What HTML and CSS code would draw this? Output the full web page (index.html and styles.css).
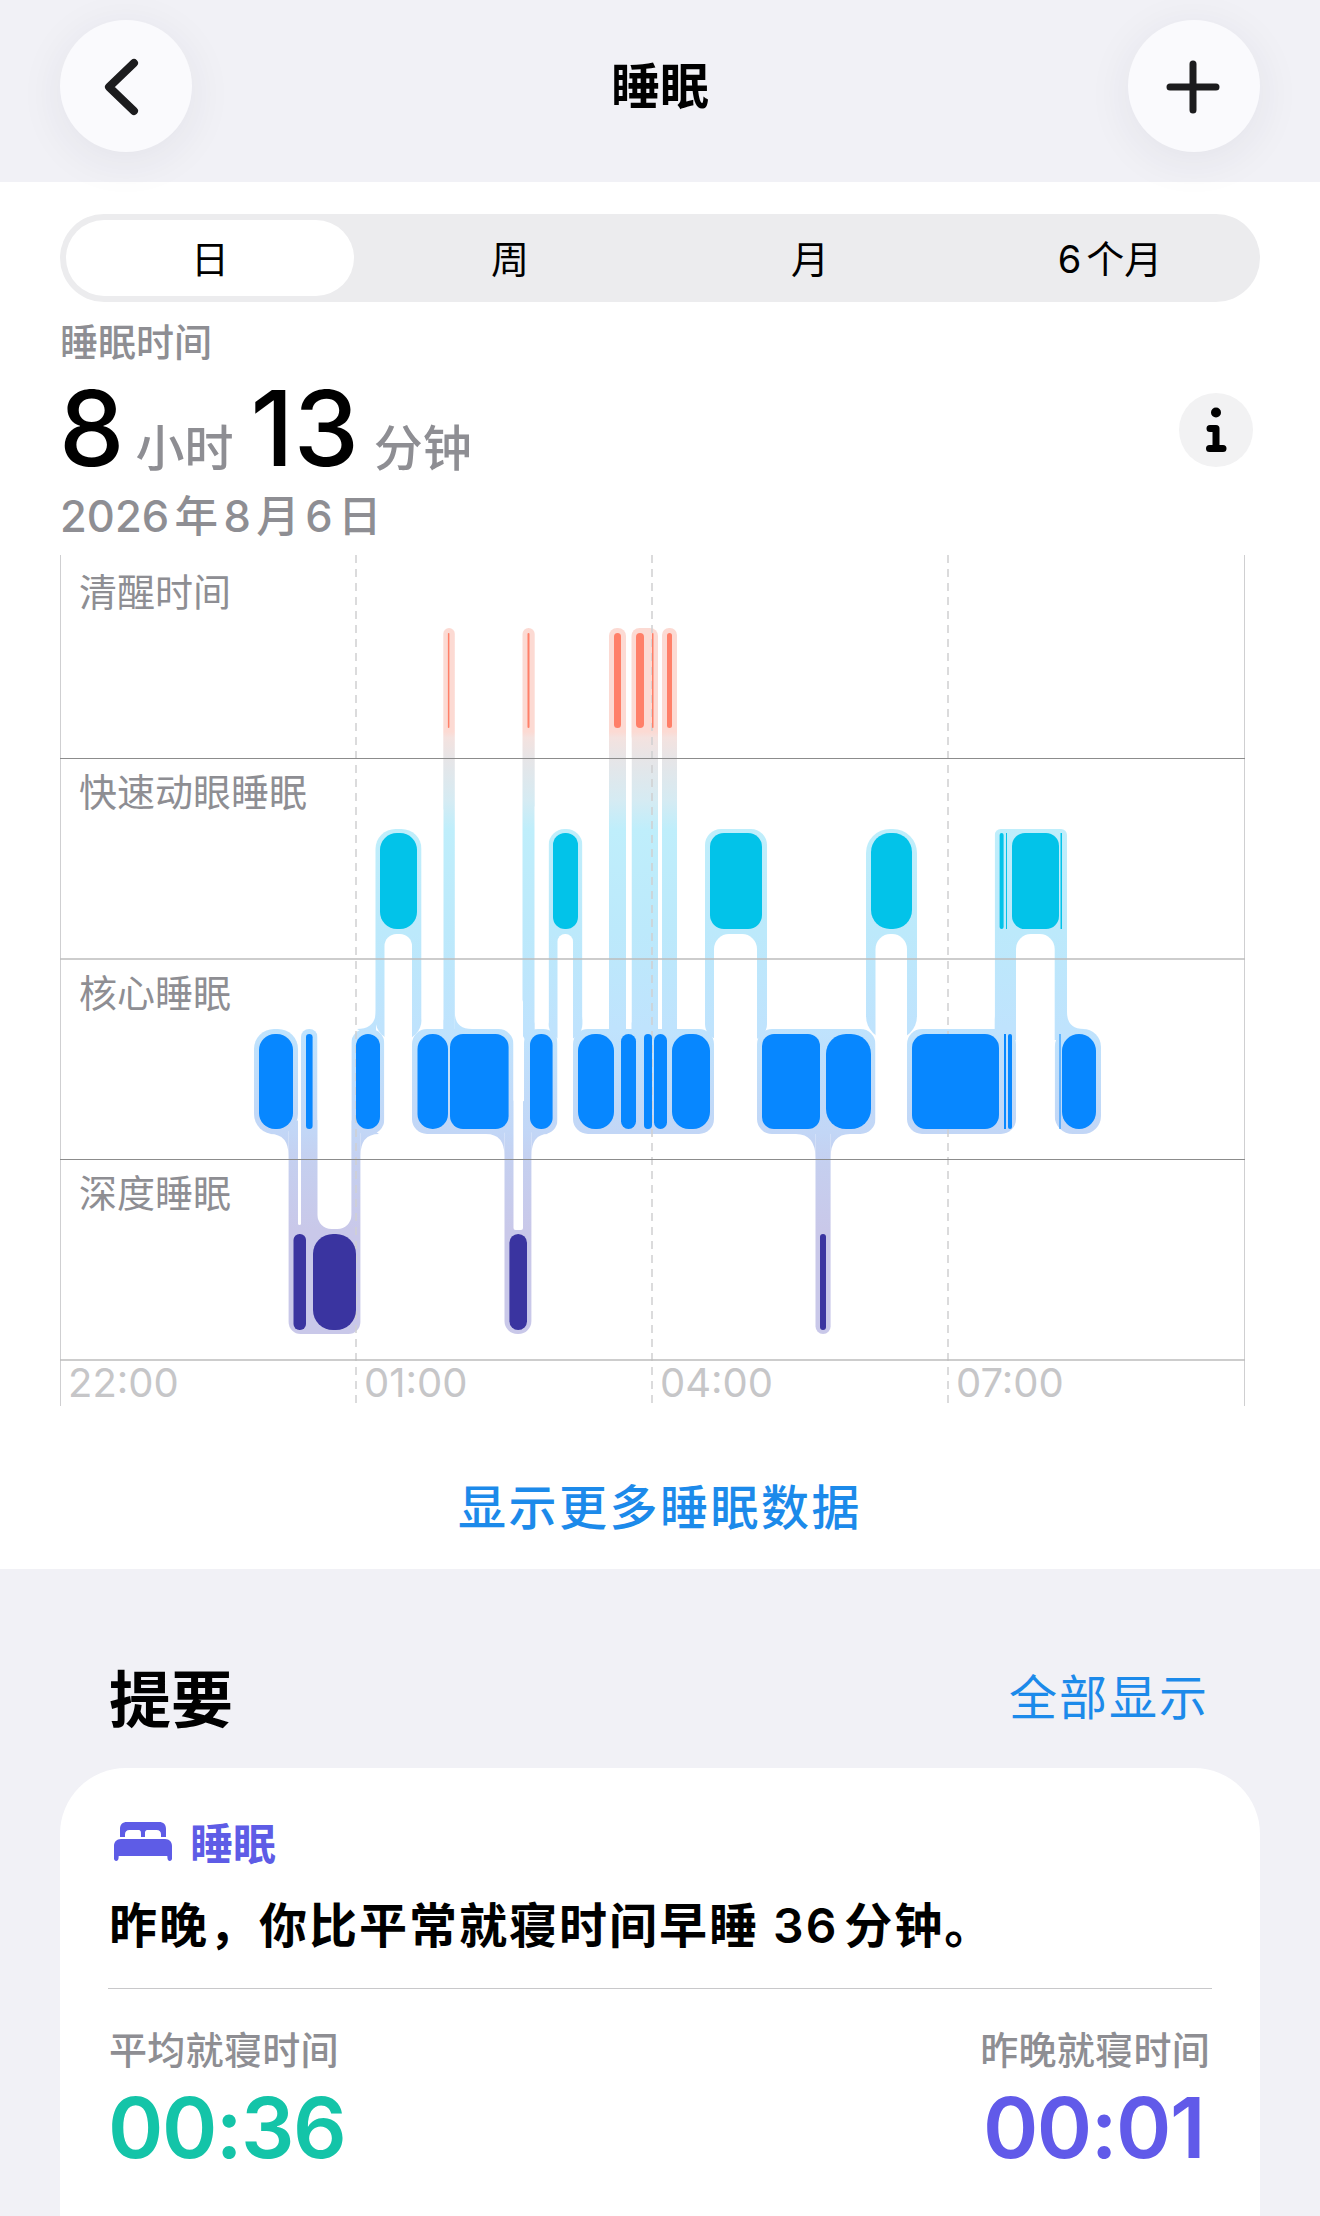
FILE: index.html
```html
<!DOCTYPE html>
<html lang="zh-CN">
<head>
  <meta charset="UTF-8">
  <meta name="viewport" content="width=device-width, initial-scale=1">
  <title>睡眠</title>
  <link rel="stylesheet" href="styles.css">
</head>
<body>

<header class="topbar">
  <button class="round-btn" aria-label="返回">
    <svg width="132" height="132" viewBox="0 0 132 132"><path class="glyph glyph-heavy" d="M74 43 49 67 74 91"/></svg>
  </button>
  <h1 class="topbar-title">睡眠</h1>
  <button class="round-btn" aria-label="添加">
    <svg width="132" height="132" viewBox="0 0 132 132"><path class="glyph" d="M65 44V90M42 67H88"/></svg>
  </button>
</header>

<main class="sleep-panel">
  <div class="segments">
    <div class="segment segment-active">日</div>
    <div class="segment">周</div>
    <div class="segment">月</div>
    <div class="segment">6个月</div>
  </div>

  <div class="totals">
    <div class="totals-text">
      <div class="totals-label">睡眠时间</div>
      <div class="totals-value">
        <span class="big-num">8</span><span class="big-unit big-unit-hours">小时</span><span class="big-num">13</span><span class="big-unit">分钟</span>
      </div>
      <div class="totals-date">2026年8月6日</div>
    </div>
    <div class="info-btn">
      <svg width="74" height="74" viewBox="0 0 74 74">
        <circle cx="37" cy="19.500" r="5" fill="#000"/>
        <path class="info-i" d="M31 35.500H37V55.500M30.500 55.500H44"/>
      </svg>
    </div>
  </div>

  <!-- sleep stages chart -->
  <div class="chart">
    <div class="chart-row chart-row-first">清醒时间</div>
    <div class="chart-row">快速动眼睡眠</div>
    <div class="chart-row">核心睡眠</div>
    <div class="chart-row">深度睡眠</div>
    <div class="chart-times">
      <span>22:00</span><span>01:00</span><span>04:00</span><span>07:00</span>
    </div>

    <svg class="chart-graph" width="1185" height="851" viewBox="60 555 1185 851">
      <defs>
        <linearGradient id="stageFlow" gradientUnits="userSpaceOnUse" x1="0" y1="628" x2="0" y2="1334">
          <stop offset="0" stop-color="#fcdad3"/>
          <stop offset="0.147" stop-color="#fcdad3"/>
          <stop offset="0.155" stop-color="#f4e2df"/>
          <stop offset="0.184" stop-color="#e7e5e7"/>
          <stop offset="0.245" stop-color="#d5ebf3"/>
          <stop offset="0.285" stop-color="#bfeefb"/>
          <stop offset="0.43" stop-color="#bce9fb"/>
          <stop offset="0.567" stop-color="#bfe3fd"/>
          <stop offset="0.715" stop-color="#c2d6f6"/>
          <stop offset="0.76" stop-color="#c5cfef"/>
          <stop offset="0.853" stop-color="#c9c8e9"/>
          <stop offset="1" stop-color="#c9c8e9"/>
        </linearGradient>
      </defs>

      <!-- halos and legs, one gradient over all of them -->
      <g fill="url(#stageFlow)">
        <rect x="443.300" y="628" width="11.500" height="412" rx="5.700"/>
        <rect x="522.500" y="628" width="12.200" height="412" rx="6"/>
        <rect x="609" y="628" width="17" height="412" rx="8"/>
        <rect x="631.500" y="628" width="26.500" height="412" rx="8"/>
        <rect x="662" y="628" width="15" height="412" rx="7"/>

        <rect x="375.500" y="829" width="46" height="211" rx="20"/>
        <rect x="548.600" y="829" width="33.800" height="211" rx="16"/>
        <rect x="705" y="829" width="62" height="211" rx="16"/>
        <rect x="866" y="829" width="51" height="211" rx="24"/>
        <rect x="994.700" y="829" width="72.300" height="211" rx="6"/>

        <rect x="254" y="1029" width="44" height="105" rx="20"/>
        <rect x="301" y="1029" width="16.500" height="105" rx="8"/>
        <rect x="351.400" y="1029" width="32.800" height="105" rx="14"/>
        <rect x="412" y="1029" width="101.500" height="105" rx="15"/>
        <rect x="524" y="1029" width="33.500" height="105" rx="14"/>
        <rect x="573" y="1029" width="141" height="105" rx="15"/>
        <rect x="757" y="1029" width="118.500" height="105" rx="15"/>
        <rect x="907" y="1029" width="109" height="105" rx="15"/>
        <rect x="1054.700" y="1029" width="46.300" height="105" rx="18"/>

        <rect x="288.600" y="1120" width="71.800" height="214" rx="12"/>
        <rect x="504.500" y="1100" width="26.900" height="234" rx="13"/>
        <rect x="815.500" y="1100" width="15.100" height="234" rx="7.500"/>

        <!-- fillets where a leg meets a block -->
        <path d="M376 1010Q376 1029 357 1029L376 1040Z"/>
        <path d="M454.800 1012Q454.800 1029 472 1029L454.800 1040Z"/>
        <path d="M1067 1012Q1067 1029 1084 1029L1067 1040Z"/>
        <path d="M288.600 1156Q288.600 1134 270 1134L288.600 1120Z"/>
        <path d="M360.400 1156Q360.400 1134 379 1134L360.400 1120Z"/>
        <path d="M504.500 1156Q504.500 1134 486 1134L504.500 1120Z"/>
        <path d="M531.400 1156Q531.400 1134 548 1134L531.400 1120Z"/>
        <path d="M815.500 1158Q815.500 1134 796 1134L815.500 1120Z"/>
        <path d="M830.600 1158Q830.600 1134 850 1134L830.600 1120Z"/>
      </g>

      <!-- white gaps between the legs -->
      <g fill="#fff">
        <rect x="384.500" y="934" width="27.500" height="215" rx="12"/>
        <rect x="557.500" y="934" width="15.500" height="215" rx="7.500"/>
        <rect x="714" y="934" width="43" height="215" rx="15"/>
        <rect x="875.500" y="934" width="31.500" height="215" rx="15"/>
        <rect x="1016" y="934" width="38.700" height="215" rx="15"/>
        <rect x="421.600" y="800" width="21.700" height="229" rx="10"/>
        <rect x="534.700" y="800" width="13.900" height="229" rx="6.900"/>
        <rect x="582.400" y="800" width="26.600" height="229" rx="13"/>
        <rect x="626" y="736" width="5.500" height="288" rx="2.700"/>
        <rect x="658" y="736" width="4" height="288" rx="2"/>
        <rect x="677" y="800" width="28" height="229" rx="14"/>
        <rect x="767" y="800" width="99" height="229" rx="14"/>
        <rect x="917" y="800" width="77.700" height="229" rx="14"/>
        <rect x="317.500" y="1000" width="33.900" height="229" rx="14"/>
        <rect x="298" y="1000" width="3" height="225" rx="1.500"/>
        <rect x="513.500" y="1000" width="9.500" height="230" rx="2"/>
      </g>

      <!-- grid -->
      <g class="grid-dash">
        <path d="M356 555V1406M652 555V1406M948 555V1406"/>
      </g>
      <g class="grid-frame">
        <path d="M60.500 555V1406M1244.500 555V1406"/>
      </g>
      <path class="grid-line" d="M60 758.500H1245"/>
      <path class="grid-line grid-line-soft" d="M60 959H1245"/>
      <path class="grid-line" d="M60 1159.500H1245"/>
      <path class="grid-line grid-line-soft" d="M60 1360H1245"/>

      <!-- awake -->
      <g fill="#ff7f68">
        <rect x="447.900" y="633" width="1.500" height="95" rx="0.700"/>
        <rect x="527.500" y="633" width="2" height="95" rx="1"/>
        <rect x="614" y="633" width="7" height="95" rx="3.500"/>
        <rect x="636" y="633" width="8" height="95" rx="4"/>
        <rect x="652" y="633" width="1.500" height="95" rx="0.700"/>
        <rect x="667" y="633" width="5" height="95" rx="2.500"/>
      </g>
      <!-- rem -->
      <g fill="#02c3e9">
        <rect x="380" y="833" width="37" height="96" rx="17"/>
        <rect x="553" y="833" width="25" height="96" rx="12"/>
        <rect x="710" y="833" width="52" height="96" rx="14"/>
        <rect x="871" y="833" width="41" height="96" rx="19"/>
        <rect x="999.600" y="833" width="4" height="96" rx="2"/>
        <rect x="1006" y="833" width="1" height="96"/>
        <rect x="1012" y="833" width="47" height="96" rx="13"/>
        <rect x="1060.500" y="833" width="1.500" height="96"/>
      </g>
      <!-- core -->
      <g fill="#0787ff">
        <rect x="259" y="1034" width="34" height="95" rx="16"/>
        <rect x="306" y="1034" width="6.600" height="95" rx="3.300"/>
        <rect x="356" y="1034" width="24" height="95" rx="12"/>
        <rect x="417.500" y="1034" width="30.500" height="95" rx="15"/>
        <rect x="450" y="1034" width="58.600" height="95" rx="13"/>
        <rect x="530" y="1034" width="22.600" height="95" rx="11"/>
        <rect x="578" y="1034" width="36" height="95" rx="17"/>
        <rect x="621" y="1034" width="15" height="95" rx="7.500"/>
        <rect x="644" y="1034" width="8" height="95" rx="4"/>
        <rect x="654" y="1034" width="13" height="95" rx="6.500"/>
        <rect x="672" y="1034" width="38" height="95" rx="17"/>
        <rect x="762" y="1034" width="58" height="95" rx="12"/>
        <rect x="826" y="1034" width="45" height="95" rx="20"/>
        <rect x="912" y="1034" width="87" height="95" rx="14"/>
        <rect x="1004" y="1034" width="2" height="95"/>
        <rect x="1008" y="1034" width="4" height="95" rx="2"/>
        <rect x="1059.500" y="1034" width="1" height="95"/>
        <rect x="1062" y="1034" width="34" height="95" rx="17"/>
      </g>
      <!-- deep -->
      <g fill="#3a34a0">
        <rect x="293.500" y="1234" width="12.500" height="96" rx="6"/>
        <rect x="313" y="1234" width="43" height="96" rx="20"/>
        <rect x="509.400" y="1234" width="17.600" height="96" rx="8.800"/>
        <rect x="820" y="1234" width="6" height="96" rx="3"/>
      </g>
    </svg>
  </div>

  <div class="more-link">显示更多睡眠数据</div>
</main>

<section class="highlights">
  <div class="highlights-head">
    <h2>提要</h2>
    <span class="show-all">全部显示</span>
  </div>

  <div class="card">
    <div class="card-title">
      <svg width="58" height="39" viewBox="0 0 58 39">
        <path d="M13 0H45C49.500 0 52 2.500 52 7V15H47V12.500C47 9.500 45.500 8 42.500 8H34C31 8 31 9.500 31 12.500V15H27V12.500C27 9.500 27 8 24 8H15.500C12.500 8 11 9.500 11 12.500V15H6V7C6 2.500 8.500 0 13 0Z"/>
        <path d="M7 17H51C55.500 17 58 20 58 24V36.500C58 38 57 39 55.800 39 54.500 39 53.700 38 53.500 36.500L53.300 34H4.700L4.500 36.500C4.300 38 3.500 39 2.200 39 1 39 0 38 0 36.500V24C0 20 2.500 17 7 17Z"/>
      </svg>
      <span>睡眠</span>
    </div>
    <p class="card-msg">昨晚，你比平常就寝时间早睡 36分钟。</p>
    <div class="card-divider"></div>
    <div class="card-stats">
      <div class="stat">
        <div class="stat-label">平均就寝时间</div>
        <div class="stat-num stat-num-green">00:36</div>
      </div>
      <div class="stat stat-right">
        <div class="stat-label">昨晚就寝时间</div>
        <div class="stat-num stat-num-purple">00:01</div>
      </div>
    </div>
  </div>
</section>

</body>
</html>
```

FILE: styles.css
```css
* {
  box-sizing: border-box;
}
html, body {
  margin: 0;
  padding: 0;
}
body {
  width: 1320px;
  height: 2216px;
  overflow: hidden;
  background: #f1f1f6;
  color: #000;
  font-family: Inter, "Noto Sans CJK SC", sans-serif;
  text-autospace: normal;
}

/* top bar */
.topbar {
  position: relative;
  z-index: 2;
  height: 182px;
  padding: 20px 60px 0;
  display: flex;
  justify-content: space-between;
  align-items: flex-start;
  background: #f1f1f6;
}
.round-btn {
  width: 132px;
  height: 132px;
  padding: 0;
  border: none;
  border-radius: 50%;
  background: #fafafd;
  box-shadow: 0 8px 46px rgba(40, 40, 70, 0.07);
}
.round-btn svg {
  display: block;
}
.glyph {
  fill: none;
  stroke: #1c1c1e;
  stroke-width: 7;
  stroke-linecap: round;
  stroke-linejoin: round;
}
.glyph-heavy {
  stroke-width: 8;
}
.topbar-title {
  margin: 0;
  font-size: 49px;
  font-weight: 700;
  line-height: 134px;
}

/* day / week / month */
.sleep-panel {
  height: 1387px;
  padding-top: 32px;
  background: #fff;
}
.segments {
  width: 1200px;
  height: 88px;
  margin-left: 60px;
  padding: 6px 0;
  display: flex;
  border-radius: 44px;
  background: #ececee;
}
.segment {
  width: 300px;
  padding-bottom: 3px;
  display: flex;
  align-items: center;
  justify-content: center;
  font-size: 38px;
}
.segment-active {
  width: 288px;
  margin: 0 6px;
  border-radius: 38px;
  background: #fff;
}

/* total time */
.totals {
  height: 253px;
  padding: 18px 67px 0 60px;
  display: flex;
  justify-content: space-between;
}
.totals-label {
  height: 44px;
  font-size: 38px;
  line-height: 44px;
  font-weight: 500;
  color: #8e8e93;
}
.totals-value {
  height: 112px;
  margin: 14px 0 0 -1px;
  display: flex;
  align-items: baseline;
}
.big-num {
  font-size: 104px;
  line-height: 100px;
  font-weight: 500;
}
.big-unit {
  margin: 0 12px 0 15px;
  font-size: 49px;
  line-height: 60px;
  font-weight: 500;
  color: #8e8e93;
}
.big-unit-hours {
  margin: 0 17px 0 11px;
}
.totals-date {
  font-size: 43.500px;
  line-height: 52px;
  font-weight: 500;
  color: #8e8e93;
}
.info-btn {
  width: 74px;
  height: 74px;
  margin-top: 73px;
  border-radius: 50%;
  background: #f2f2f3;
}
.info-btn svg {
  display: block;
}
.info-i {
  fill: none;
  stroke: #000;
  stroke-width: 7;
  stroke-linecap: round;
  stroke-linejoin: round;
}

/* stages chart */
.chart {
  position: relative;
  width: 1185px;
  height: 851px;
  margin-left: 60px;
  display: grid;
  grid-template-rows: 203px 201px 200px 201px 46px;
}
.chart-row {
  padding: 12px 0 0 19px;
  font-size: 38px;
  line-height: 44px;
  font-weight: 400;
  color: #8e8e93;
}
.chart-row-first {
  padding-top: 15px;
}
.chart-times {
  display: flex;
  font-size: 40px;
  line-height: 46px;
  color: #c6c6c8;
}
.chart-times span {
  width: 296px;
  padding-left: 8px;
}
.chart-graph {
  position: absolute;
  top: 0;
  left: 0;
  pointer-events: none;
}
.chart-row, .chart-times {
  position: relative;
  z-index: 1;
}
.grid-dash path {
  fill: none;
  stroke: #cfcfd1;
  stroke-width: 1.500;
  stroke-dasharray: 8 6;
}
.grid-frame path {
  fill: none;
  stroke: #cfcfd1;
  stroke-width: 1;
}
.grid-line {
  fill: none;
  stroke: #8c8c8c;
  stroke-width: 1;
}
.grid-line-soft {
  stroke: #bdbdbd;
  stroke-width: 1.500;
}
.more-link {
  padding-top: 70px;
  text-align: center;
  font-size: 48px;
  line-height: 64px;
  letter-spacing: 2.500px;
  font-weight: 500;
  color: #1c8aea;
}

/* highlights */
.highlights {
  padding: 0 60px;
}
.highlights-head {
  height: 199px;
  padding: 100px 51px 0 49px;
  display: flex;
  justify-content: space-between;
  align-items: flex-start;
}
.highlights-head h2 {
  margin: 0;
  font-size: 62px;
  line-height: 64px;
  font-weight: 700;
}
.show-all {
  font-size: 48px;
  line-height: 58px;
  letter-spacing: 2px;
  color: #1c8aea;
}
.card {
  height: 520px;
  padding: 53px 50px 0 50px;
  border-radius: 66px;
  background: #fff;
}
.card-title {
  height: 40px;
  padding-left: 4px;
  display: flex;
  align-items: center;
  gap: 18px;
  font-size: 43px;
  font-weight: 700;
  color: #5e5ce6;
}
.card-title svg {
  fill: #5e5ce6;
}
.card-msg {
  margin: 35px 0 0 -1px;
  font-size: 48px;
  line-height: 60px;
  letter-spacing: 2px;
  font-weight: 600;
}
.card-divider {
  height: 1px;
  margin: 32px -2px 0 -2px;
  background: #c8c8ca;
}
.card-stats {
  margin-top: 38px;
  display: flex;
  justify-content: space-between;
}
.stat-right {
  text-align: right;
}
.stat-label {
  margin-left: -1px;
  font-size: 38px;
  line-height: 46px;
  letter-spacing: 0.300px;
  font-weight: 500;
  color: #8e8e93;
}
.stat-num {
  margin: 5px 0 0 -2px;
  font-size: 84px;
  line-height: 100px;
  letter-spacing: -1.500px;
  font-weight: 600;
}
.stat-num-green {
  color: #14c4a8;
}
.stat-num-purple {
  margin-right: 6px;
  color: #615ae9;
}
```
